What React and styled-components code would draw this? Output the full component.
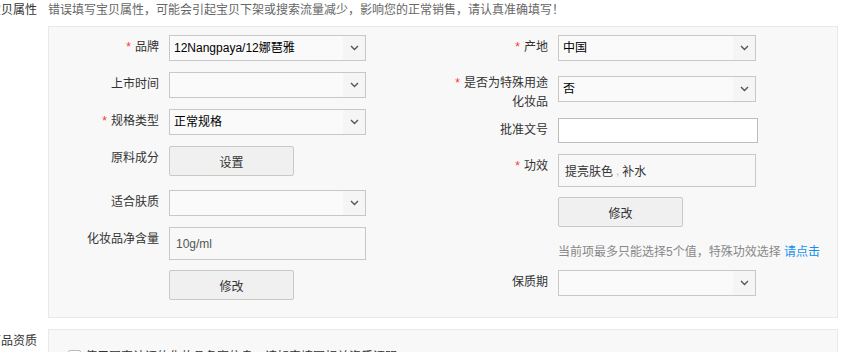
import React from "react";
import styled, { createGlobalStyle } from "styled-components";

const GlobalStyle = createGlobalStyle`
  html, body {
    margin: 0;
    padding: 0;
    background: #fff;
  }
  body {
    font-family: "Liberation Sans", "Noto Sans CJK SC", sans-serif;
    font-size: 12px;
    color: #333;
    overflow: hidden;
  }
`;

const Page = styled.div`
  margin-left: -12px;
  width: 864px;
`;

const Section = styled.section`
  display: flex;
  margin-top: ${(p) => p.$mt || 0}px;
`;

const SectionTitle = styled.div`
  flex: none;
  width: 60px;
  box-sizing: border-box;
  padding: ${(p) => p.$pt}px 11px 0 0;
  text-align: right;
  line-height: 16px;
  color: #333;
  white-space: nowrap;
`;

const SectionBody = styled.div`
  flex: none;
  width: 790px;
`;

const Warning = styled.p`
  margin: 0 0 8px;
  padding-top: 2px;
  line-height: 16px;
  color: #666;
  white-space: nowrap;
`;

const Panel = styled.div`
  box-sizing: border-box;
  width: 790px;
  background: #f8f8f8;
  border: 1px solid #e9e9e9;
  padding: ${(p) => p.$pad};
  display: flex;
`;

const Column = styled.div`
  flex: none;
  width: ${(p) => p.$w}px;
  display: flex;
  flex-direction: column;
`;

const Row = styled.div`
  display: flex;
  align-items: flex-start;
  margin-top: ${(p) => p.$mt || 0}px;
`;

const Label = styled.label`
  flex: none;
  width: 110px;
  margin-right: 10px;
  text-align: right;
  color: #333;
  line-height: ${(p) => (p.$multi ? 19 : 16)}px;
  padding-top: ${(p) => (p.$multi ? 0 : 4)}px;
  margin-top: ${(p) => (p.$multi ? -2 : 0)}px;
`;

const Star = styled.span`
  color: #f33;
  margin-right: 4px;
`;

const SelectBox = styled.div`
  box-sizing: border-box;
  width: ${(p) => p.$w}px;
  height: 26px;
  border: 1px solid #c8c8c8;
  background: #fafafa;
  display: flex;
  align-items: stretch;
  color: #000;
`;

const SelectValue = styled.span`
  flex: 1;
  padding-left: 4px;
  line-height: 24px;
  white-space: nowrap;
  overflow: hidden;
`;

const SelectArrow = styled.span`
  flex: none;
  width: 22px;
  display: flex;
  align-items: center;
  justify-content: center;
  background: #f5f5f5;
`;

const Button = styled.button`
  box-sizing: border-box;
  width: 125px;
  height: 30px;
  padding: 0;
  border: 1px solid #c9c9c9;
  border-radius: 2px;
  background: #f0f0f0;
  color: #333;
  font: inherit;
  cursor: pointer;
`;

const Input = styled.input`
  box-sizing: border-box;
  width: ${(p) => p.$w}px;
  height: ${(p) => p.$h}px;
  margin: 0;
  padding: 0 0 0 6px;
  border: 1px solid ${(p) => p.$border};
  background: ${(p) => p.$bg};
  color: #555;
  font: inherit;
  outline: none;
`;

const TagBox = styled.div`
  box-sizing: border-box;
  width: 198px;
  height: 33px;
  padding-left: 6px;
  border: 1px solid #c8c8c8;
  background: #f8f8f8;
  display: flex;
  align-items: center;
  color: #333;
`;

const Sep = styled.span`
  color: #bbb;
  padding: 0 3px;
`;

const Hint = styled.div`
  margin-top: ${(p) => p.$mt}px;
  padding-left: 120px;
  line-height: 20px;
  color: #888;
  white-space: nowrap;
`;

const HintLink = styled.a`
  color: #1490ec;
  text-decoration: none;
  cursor: pointer;
`;

const CheckRow = styled.div`
  display: flex;
  align-items: flex-start;
  line-height: 16px;
  color: #333;
  gap: 4px;
`;

const CheckBox = styled.span`
  box-sizing: border-box;
  width: 13px;
  height: 13px;
  margin-top: 1px;
  border: 1px solid #bbb;
  border-radius: 2px;
  background: #fff;
`;

const Chevron = () => (
  <svg width="9" height="6" viewBox="0 0 9 6">
    <path d="M1 1l3.5 3.5L8 1" fill="none" stroke="#555" strokeWidth="1.4" />
  </svg>
);

const Select = ({ w, value }) => (
  <SelectBox $w={w}>
    <SelectValue>{value}</SelectValue>
    <SelectArrow>
      <Chevron />
    </SelectArrow>
  </SelectBox>
);

const Req = () => <Star>*</Star>;

export default function App() {
  return (
    <Page>
      <GlobalStyle />
      <Section>
        <SectionTitle $pt={2}>宝贝属性</SectionTitle>
        <SectionBody>
          <Warning>
            错误填写宝贝属性，可能会引起宝贝下架或搜索流量减少，影响您的正常销售，请认真准确填写！
          </Warning>
          <Panel $pad="8px 0 17px 0">
            <Column $w={389}>
              <Row>
                <Label>
                  <Req />品牌
                </Label>
                <Select w={197} value="12Nangpaya/12娜琶雅" />
              </Row>
              <Row $mt={11}>
                <Label>上市时间</Label>
                <Select w={197} value="" />
              </Row>
              <Row $mt={11}>
                <Label>
                  <Req />规格类型
                </Label>
                <Select w={197} value="正常规格" />
              </Row>
              <Row $mt={11}>
                <Label>原料成分</Label>
                <Button>设置</Button>
              </Row>
              <Row $mt={14}>
                <Label>适合肤质</Label>
                <Select w={197} value="" />
              </Row>
              <Row $mt={11}>
                <Label>化妆品净含量</Label>
                <Input $w={197} $h={33} $border="#c8c8c8" $bg="#f8f8f8" defaultValue="10g/ml" readOnly />
              </Row>
              <Row $mt={10}>
                <Label />
                <Button>修改</Button>
              </Row>
            </Column>
            <Column $w={390}>
              <Row>
                <Label>
                  <Req />产地
                </Label>
                <Select w={198} value="中国" />
              </Row>
              <Row $mt={15}>
                <Label $multi>
                  <Req />是否为特殊用途
                  <br />
                  化妆品
                </Label>
                <Select w={198} value="否" />
              </Row>
              <Row $mt={6}>
                <Label>批准文号</Label>
                <Input $w={200} $h={25} $border="#bdbdbd" $bg="#fff" />
              </Row>
              <Row $mt={11}>
                <Label>
                  <Req />功效
                </Label>
                <TagBox>
                  提亮肤色<Sep>,</Sep>补水
                </TagBox>
              </Row>
              <Row $mt={10}>
                <Label />
                <Button>修改</Button>
              </Row>
              <Hint $mt={15}>
                当前项最多只能选择5个值，特殊功效选择 <HintLink>请点击</HintLink>
              </Hint>
              <Row $mt={8}>
                <Label>保质期</Label>
                <Select w={198} value="" />
              </Row>
            </Column>
          </Panel>
        </SectionBody>
      </Section>
      <Section $mt={11}>
        <SectionTitle $pt={4}>商品资质</SectionTitle>
        <SectionBody>
          <Panel $pad="19px 0 24px 19px">
            <CheckRow>
              <CheckBox />
              <span>使用国家认证的化妆品备案信息，请如实填写相关资质证明</span>
            </CheckRow>
          </Panel>
        </SectionBody>
      </Section>
    </Page>
  );
}
